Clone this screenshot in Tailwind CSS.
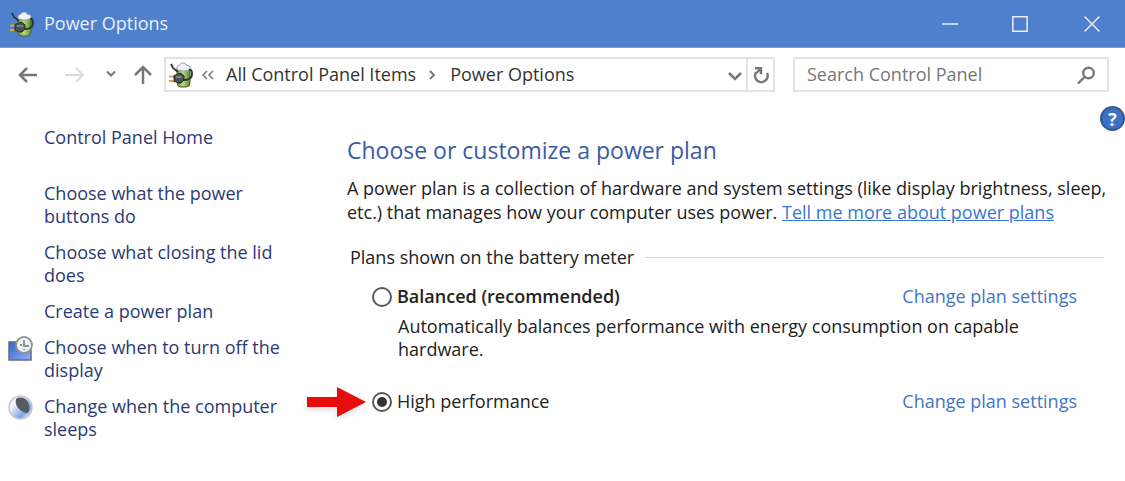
<!DOCTYPE html>
<html lang="en">
<head>
    <meta charset="UTF-8">
    <meta name="viewport" content="width=device-width, initial-scale=1.0">
    <title>Power Options</title>
    <script src="https://cdn.jsdelivr.net/npm/@tailwindcss/browser@4"></script>
</head>
<body class="min-h-screen bg-white font-['Open_Sans','Noto_Sans',sans-serif] text-[18px] leading-[23px] text-[#222]">
    <!-- Plug and battery, used in the title bar and the address bar -->
    <svg class="absolute size-0" aria-hidden="true">
        <defs>
            <linearGradient id="cell" x1="0" x2="1">
                <stop offset="0" stop-color="#6c9a3c"/>
                <stop offset=".45" stop-color="#b2dc7c"/>
                <stop offset="1" stop-color="#5d8b2c"/>
            </linearGradient>
            <linearGradient id="screen" x1="0" y1="0" x2="1" y2="1">
                <stop offset="0" stop-color="#3a62cc"/>
                <stop offset="1" stop-color="#8fb0f8"/>
            </linearGradient>
            <linearGradient id="moon" x1="0" y1="0" x2="1" y2="1">
                <stop offset=".3" stop-color="#f1f4fa"/>
                <stop offset=".7" stop-color="#7da2e8"/>
                <stop offset=".9" stop-color="#e6ecf6"/>
            </linearGradient>
            <symbol id="power" viewBox="0 0 26 26">
                <rect x="9" y="3" width="13" height="22" rx="4" fill="url(#cell)" stroke="#4b6330" stroke-width="1"/>
                <path d="M9 8V5q1-2 3-2 0-2 3-2t3 2q3 0 4 2v3q-6 2-13 0z" fill="#eef0fb" stroke="#8d90a8" stroke-width=".8"/>
                <path d="M3 2l2 4 5 4" fill="none" stroke="#30353a" stroke-width="1.800"/>
                <path d="M16 18c5 0 8-2 8-6 0-3-1-5-3-4" fill="none" stroke="#30353a" stroke-width="2"/>
                <path d="M1 14.500h6M1 19h6" stroke="#dba832" stroke-width="1.800"/>
                <path d="M6 13.500l3-1 1-1h3l3 2.500v4l-3 3h-3l-1-1-3-.5z" fill="#4a4f51" stroke="#222628"/>
                <path d="M8 15h6" stroke="#899090" stroke-width="1.500"/>
            </symbol>
        </defs>
    </svg>

    <header class="flex h-12 items-center border-b border-[#7b9fdf] bg-[#4e80cd] pl-[9px] text-[#e8effa]">
        <svg class="size-[26px]"><use href="#power"/></svg>
        <h1 class="ml-[9px] flex-1">Power Options</h1>
        <div class="flex h-full">
            <button class="flex w-[70px] items-center justify-center" aria-label="Minimize">
                <svg width="16" height="16" fill="none" stroke="currentColor" stroke-width="1.500"><path d="M0 8h16"/></svg>
            </button>
            <button class="flex w-[70px] items-center justify-center" aria-label="Maximize">
                <svg width="16" height="16" fill="none" stroke="currentColor" stroke-width="1.500"><path d="M.8.8h14.400v14.400H.8z"/></svg>
            </button>
            <button class="flex w-[70px] items-center justify-center pl-1" aria-label="Close">
                <svg width="16" height="16" fill="none" stroke="currentColor" stroke-width="1.500"><path d="M.5.5l15 15M15.500.5l-15 15"/></svg>
            </button>
        </div>
    </header>

    <nav class="flex items-center pt-[9px] pr-4 pl-[18px] text-[#777]">
        <button aria-label="Back">
            <svg width="20" height="20" fill="none" stroke="currentColor" stroke-width="2.500"><path d="M19 10H2M9 3l-7 7 7 7"/></svg>
        </button>
        <button class="ml-[27px] text-[#dadada]" aria-label="Forward" disabled>
            <svg width="20" height="20" fill="none" stroke="currentColor" stroke-width="2"><path d="M0 10h18M11 3l7 7-7 7"/></svg>
        </button>
        <button class="ml-[21px]" aria-label="Recent locations">
            <svg width="10" height="20" fill="none" stroke="currentColor" stroke-width="2"><path d="M1 6.500l4 4 4-4"/></svg>
        </button>
        <button class="ml-[17px]" aria-label="Up">
            <svg width="20" height="20" fill="none" stroke="currentColor" stroke-width="2.500"><path d="M10 19V2M2 10l8-8 8 8"/></svg>
        </button>
        <div class="ml-[11px] flex h-[35px] flex-1 items-center border-2 border-[#e3e3e3] pl-[2px]">
            <svg class="size-[26px]"><use href="#power"/></svg>
            <svg class="ml-[7px]" width="14" height="14" fill="none" stroke="currentColor" stroke-width="1.500"><path d="M6 3L2 7l4 4M12 3L8 7l4 4"/></svg>
            <a href="#" class="ml-[11px] text-[#333]">All Control Panel Items</a>
            <svg class="ml-[13px]" width="8" height="12" fill="none" stroke="currentColor" stroke-width="1.800"><path d="M1 2l4 4-4 4"/></svg>
            <a href="#" class="ml-[13px] flex-1 text-[#333]">Power Options</a>
            <button class="mr-[3px]" aria-label="Previous locations">
                <svg width="16" height="12" fill="none" stroke="currentColor" stroke-width="2.600"><path d="M2 4l6 6 6-6"/></svg>
            </button>
            <button class="flex h-full w-[27px] items-center justify-center border-l-2 border-[#e3e3e3]" aria-label="Refresh">
                <svg class="text-[#777]" width="18" height="18" fill="none" stroke="currentColor" stroke-width="2.400"><path d="M4 6.500A6.300 6.300 0 1 0 15 7M3 2.200h6v6M9 2.500L4.500 7"/></svg>
            </button>
        </div>
        <label class="ml-[18px] flex h-[35px] w-[316px] items-center border-2 border-[#e3e3e3] pr-[11px] pl-3">
            <input type="text" placeholder="Search Control Panel" aria-label="Search Control Panel" class="min-w-0 flex-1 outline-none placeholder:text-[#777]">
            <svg width="20" height="20" fill="none" stroke="currentColor" stroke-width="2.400"><circle cx="12.500" cy="8" r="5.300"/><path d="M8.500 12L2 18.500"/></svg>
        </label>
    </nav>

    <div class="flex pt-[14px]">
        <aside class="w-[347px] shrink-0 pt-5 pl-2 text-[#2b3a75]">
            <ul class="flex flex-col gap-[13px]">
                <li class="mb-5 pl-9"><a href="#">Control Panel Home</a></li>
                <li class="pl-9"><a href="#">Choose what the power<br>buttons do</a></li>
                <li class="pl-9"><a href="#">Choose what closing the lid<br>does</a></li>
                <li class="pl-9"><a href="#">Create a power plan</a></li>
                <li class="flex items-start gap-[11px]">
                    <svg class="size-[25px] shrink-0" viewBox="0 0 25 25">
                        <path d="M1 6h22v18H1z" fill="url(#screen)" stroke="#676c80" stroke-width="1.500"/>
                        <circle cx="16" cy="9" r="8" fill="#f2f4f4" stroke="#8e9292" stroke-width="1.800"/>
                        <path d="M16 4v6h5M12 9h2M16 13v1" fill="none" stroke="#667782" stroke-width="1.500"/>
                    </svg>
                    <a href="#">Choose when to turn off the<br>display</a>
                </li>
                <li class="flex items-start gap-[11px]">
                    <svg class="size-[25px] shrink-0" viewBox="0 0 25 25">
                        <circle cx="12.500" cy="12.500" r="11.500" fill="url(#moon)" stroke="#c6cacf" stroke-width="1.500"/>
                        <path d="M8 4C12 1 18 3 20 7c2 4 2 8 0 11-6 0-14-6-12-14z" fill="#555b62"/>
                    </svg>
                    <a href="#">Change when the computer<br>sleeps</a>
                </li>
            </ul>
        </aside>

        <main class="min-w-0 flex-1 pt-[30px] pr-[22px]">
            <h2 class="text-[23px] leading-[28px] text-[#3a5ba8]">Choose or customize a power plan</h2>
            <p class="mt-[12px] whitespace-nowrap leading-6">A power plan is a collection of hardware and system settings (like display brightness, sleep,<br>etc.) that manages how your computer uses power. <a href="#" class="text-[#3a76cf] underline">Tell me more about power plans</a></p>

            <fieldset class="mt-[22px] pl-[3px]">
                <legend class="flex w-full items-center gap-[11px]">Plans shown on the battery meter<span class="h-px flex-1 bg-[#d5d5d5]"></span></legend>
                <div class="mt-4 flex items-center pr-[26px] pl-[22px]">
                    <input type="radio" name="plan" id="balanced" class="size-5 appearance-none rounded-full border-2 border-[#5a5a5a]">
                    <label for="balanced" class="ml-[5px] flex-1 font-semibold">Balanced (recommended)</label>
                    <a href="#" class="text-[#4475c4]">Change plan settings</a>
                </div>
                <p class="mt-[7px] pl-12">Automatically balances performance with energy consumption on capable<br>hardware.</p>
                <div class="relative mt-[29px] flex items-center pr-[26px] pl-[22px]">
                    <svg class="absolute -left-[43px] -top-1 drop-shadow-md" width="60" height="32" fill="#e80c0c"><path d="M0 11h30V1l29 15-29 15V21H0z"/></svg>
                    <input type="radio" name="plan" id="high" checked class="size-5 appearance-none rounded-full border-2 border-[#5a5a5a] bg-[#333] bg-clip-content p-[3px]">
                    <label for="high" class="ml-[5px] flex-1">High performance</label>
                    <a href="#" class="text-[#4475c4]">Change plan settings</a>
                </div>
            </fieldset>
        </main>
        <button class="absolute right-0 top-[106px] size-[25px] rounded-full border-2 border-[#35598f] bg-[#3e70c4] text-lg leading-5 font-bold text-white" aria-label="Help">?</button>
    </div>
</body>
</html>
